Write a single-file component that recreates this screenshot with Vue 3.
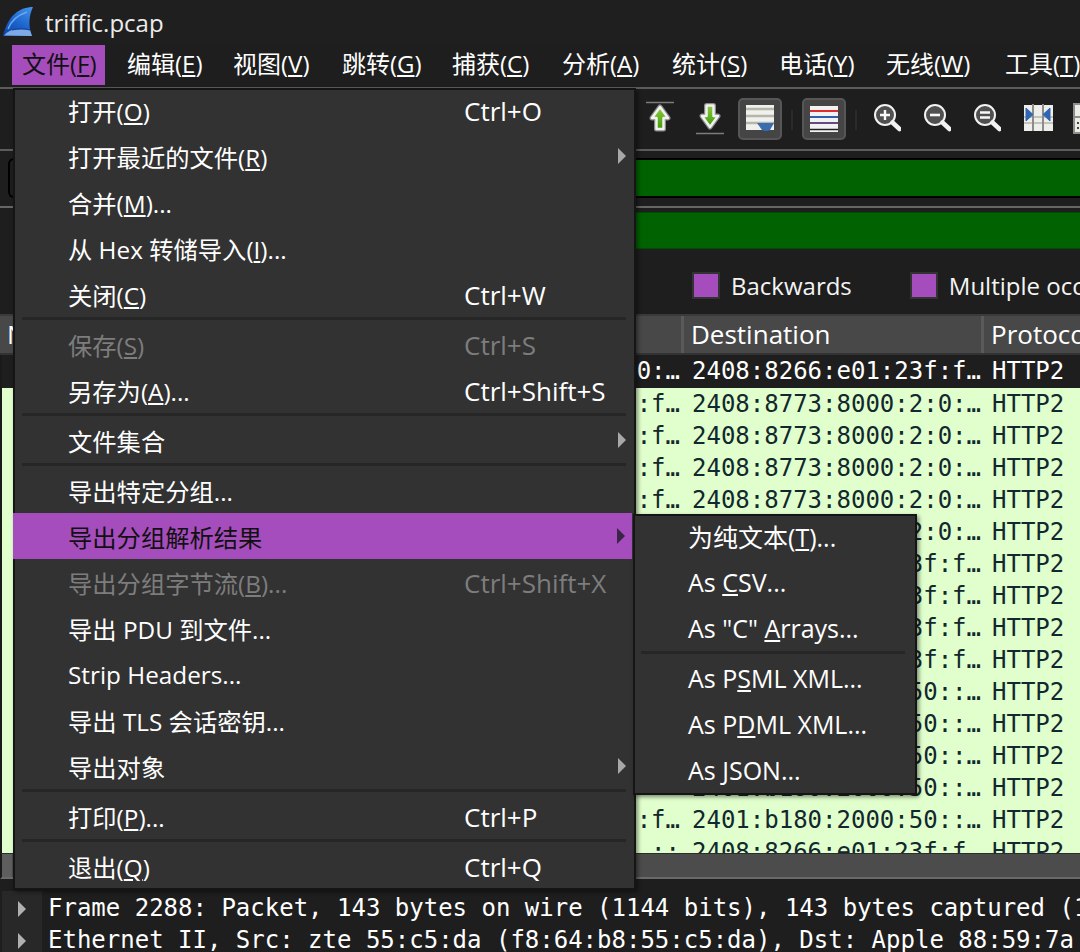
<template>
  <div class="app">
    <div class="titlebar">
      <svg class="logo" width="36" height="36" viewBox="0 4 36 36">
        <defs>
          <linearGradient id="fin" x1="0.8" y1="0" x2="0.2" y2="1">
            <stop offset="0" stop-color="#3f8fe8" />
            <stop offset="0.55" stop-color="#1c62cc" />
            <stop offset="1" stop-color="#0f46a4" />
          </linearGradient>
          <linearGradient id="arrowUp" x1="0" y1="0" x2="0" y2="1">
            <stop offset="0" stop-color="#8ccc40" />
            <stop offset="1" stop-color="#3f9a08" />
          </linearGradient>
        </defs>
        <path d="M33 7C20 7 8 15 3 36L32 36C28 26 29 15 33 7Z" fill="url(#fin)" />
        <path d="M4 35.500C6 33 9 31 12 30C18 29 25 29 30 30L32 36Z" fill="#7fa9e4" />
        <path d="M12 30C18 28.500 25 28.500 30 30" stroke="#0f3f94" stroke-width="1" fill="none" />
        <path d="M27 12C18 15 11 21 8 29" stroke="#6aa8f0" stroke-width="1.500" fill="none" />
      </svg>
      <span class="title">triffic.pcap</span>
    </div>

    <div class="menubar">
      <div
        v-for="(m, i) in menus"
        :key="m.name"
        class="menubar-item"
        :class="{ open: i === 0 }"
        :style="{ width: m.w + 'px' }"
      >{{ m.name }}(<u>{{ m.key }}</u>)</div>
    </div>

    <div class="toolbar">
      <svg class="tool" width="30" height="40" viewBox="0 0 30 40">
        <path d="M1 2.500H29" stroke="#7c7c7c" stroke-width="1.500" />
        <path d="M15 7L23 18H18.500V29H11.500V18H7Z" fill="none" stroke="#8a8a8a" stroke-width="5" stroke-linejoin="round" />
        <path d="M15 7L23 18H18.500V29H11.500V18H7Z" fill="url(#arrowUp)" stroke="#f2f2f2" stroke-width="2.500" stroke-linejoin="round" />
      </svg>
      <svg class="tool down" width="30" height="40" viewBox="0 0 30 40">
        <path d="M1 33.500H29" stroke="#7c7c7c" stroke-width="1.500" />
        <path d="M15 27L23 16H18.500V5.500H11.500V16H7Z" fill="none" stroke="#8a8a8a" stroke-width="5" stroke-linejoin="round" />
        <path d="M15 27L23 16H18.500V5.500H11.500V16H7Z" fill="url(#arrowUp)" stroke="#f2f2f2" stroke-width="2.500" stroke-linejoin="round" />
      </svg>
      <div class="tool-btn">
        <svg width="30" height="28" viewBox="0 0 30 28">
          <rect x="1" y="0" width="28" height="25" fill="#f0f0ec" />
          <path d="M1 4H29M1 11H29M1 18H29" stroke="#b6b6aa" stroke-width="2.500" />
          <path d="M12 18H29L25 25Q21 27 17 25Z" fill="#3a6cb0" />
        </svg>
      </div>
      <div class="tool-sep"></div>
      <div class="tool-btn">
        <svg width="30" height="28" viewBox="0 0 30 28">
          <rect x="1" y="1" width="28" height="26" fill="#f2f2f2" />
          <path d="M1 6H29" stroke="#e02c2c" stroke-width="2" />
          <path d="M1 12H29" stroke="#2f5fae" stroke-width="2" />
          <path d="M1 18H29" stroke="#654a80" stroke-width="2" />
          <path d="M1 24.500H29" stroke="#222" stroke-width="1.500" />
        </svg>
      </div>
      <div class="tool-sep last"></div>
      <svg v-for="z in zooms" :key="z" class="tool" width="30" height="40" viewBox="0 0 30 40">
        <circle cx="14" cy="15" r="10" fill="#505050" stroke="#f2f2f2" stroke-width="2" />
        <path d="M21.500 22.500L28.500 29" stroke="#f2f2f2" stroke-width="4.500" stroke-linecap="round" />
        <path v-if="z === 'in'" d="M9 15H19M14 10V20" stroke="#f8f8f8" stroke-width="2.400" />
        <path v-if="z === 'out'" d="M9 15H19" stroke="#f8f8f8" stroke-width="2.600" />
        <path v-if="z === 'fit'" d="M9 12.500H19M9 17.500H19" stroke="#f8f8f8" stroke-width="2.400" />
      </svg>
      <svg class="tool resize" width="34" height="40" viewBox="0 0 34 40">
        <rect x="3" y="5" width="29" height="26" fill="#eeeeea" />
        <path d="M3 17H32M3 23H32" stroke="#b6b6ac" stroke-width="1.500" />
        <path d="M12 4V31M22 4V31" stroke="#8c8c8c" stroke-width="2" />
        <path d="M5 8L12 14.500L5 21Z M29 8L22 14.500L29 21Z" fill="#2f66b4" stroke="#2f66b4" stroke-linejoin="round" />
      </svg>
      <svg class="tool" width="30" height="40" viewBox="0 0 30 40">
        <rect x="1" y="4" width="28" height="29" fill="#ecece6" stroke="#8e8e8e" stroke-width="2" />
        <path d="M1 17H29" stroke="#8e8e8e" stroke-width="2" />
        <path d="M5 22V24M5 27V29" stroke="#444" stroke-width="2" />
      </svg>
    </div>

    <div class="filter-box"><div class="filter-green"></div></div>
    <div class="divider"></div>
    <div class="filter-plain"></div>

    <div class="findbar">
      <label class="check"><span class="box"></span>Backwards</label>
      <label class="check"><span class="box"></span>Multiple occurrences</label>
    </div>

    <div class="table-head">
      <div class="head-src"><span class="no">No.</span></div>
      <div class="head-dst">Destination</div>
      <div class="head-proto">Protocol</div>
    </div>
    <div class="rows">
      <div v-for="(r, i) in rows" :key="i" class="row" :class="{ first: i === 0 }">
        <div class="col-src">{{ r.src }}</div>
        <div class="col-dst">{{ r.dst }}</div>
        <div class="col-proto">HTTP2</div>
      </div>
    </div>
    <div class="hscroll"><div class="hscroll-end"></div></div>

    <div class="details">
      <div class="gutter">
        <span v-for="d in details" :key="d" class="gutter-cell"><span class="tree-arrow"></span></span>
      </div>
      <div class="lines">
        <div v-for="d in details" :key="d" class="detail">{{ d }}</div>
      </div>
    </div>

    <!-- 文件 menu -->
    <div class="menu file-menu">
      <template v-for="(item, i) in fileMenu" :key="i">
        <div v-if="item.sep" class="sep"></div>
        <div v-else class="item" :class="{ disabled: item.disabled, active: item.active }">
          <span class="label">{{ item.a }}<u v-if="item.k">{{ item.k }}</u>{{ item.b }}</span>
          <span v-if="item.sc" class="shortcut">{{ item.sc }}</span>
          <span v-if="item.sub" class="arrow"></span>
        </div>
      </template>
    </div>

    <!-- 导出分组解析结果 submenu -->
    <div class="menu sub-menu">
      <template v-for="(item, i) in subMenu" :key="i">
        <div v-if="item.sep" class="sep"></div>
        <div v-else class="item">
          <span class="label">{{ item.a }}<u>{{ item.k }}</u>{{ item.b }}</span>
        </div>
      </template>
    </div>
  </div>
</template>

<script setup>
const menus = [
  { name: '文件', key: 'F', w: 93 },
  { name: '编辑', key: 'E', w: 94 },
  { name: '视图', key: 'V', w: 97 },
  { name: '跳转', key: 'G', w: 98 },
  { name: '捕获', key: 'C', w: 98 },
  { name: '分析', key: 'A', w: 98 },
  { name: '统计', key: 'S', w: 95 },
  { name: '电话', key: 'Y', w: 95 },
  { name: '无线', key: 'W', w: 107 },
  { name: '工具', key: 'T', w: 90 }
]

const zooms = ['in', 'out', 'fit']

const D8773 = '2408:8773:8000:2:0:…'
const D8266 = '2408:8266:e01:23f:f…'
const D2401 = '2401:b180:2000:50::…'

const rows = [
  { src: '0:…', dst: D8266 },
  { src: ':f…', dst: D8773 },
  { src: ':f…', dst: D8773 },
  { src: ':f…', dst: D8773 },
  { src: ':f…', dst: D8773 },
  { src: '', dst: D8773 },
  { src: '', dst: D8266 },
  { src: '', dst: D8266 },
  { src: '', dst: D8266 },
  { src: '', dst: D8266 },
  { src: '', dst: D2401 },
  { src: '', dst: D2401 },
  { src: '', dst: D2401 },
  { src: '', dst: D2401 },
  { src: ':f…', dst: D2401 },
  { src: '::', dst: D8266 }
]

const details = [
  'Frame 2288: Packet, 143 bytes on wire (1144 bits), 143 bytes captured (1144 bits)',
  'Ethernet II, Src: zte_55:c5:da (f8:64:b8:55:c5:da), Dst: Apple_88:59:7a'
]

const fileMenu = [
  { a: '打开(', k: 'O', b: ')', sc: 'Ctrl+O' },
  { a: '打开最近的文件(', k: 'R', b: ')', sub: true },
  { a: '合并(', k: 'M', b: ')...' },
  { a: '从 Hex 转储导入(', k: 'I', b: ')...' },
  { a: '关闭(', k: 'C', b: ')', sc: 'Ctrl+W' },
  { sep: true },
  { a: '保存(', k: 'S', b: ')', sc: 'Ctrl+S', disabled: true },
  { a: '另存为(', k: 'A', b: ')...', sc: 'Ctrl+Shift+S' },
  { sep: true },
  { a: '文件集合', sub: true },
  { sep: true },
  { a: '导出特定分组...' },
  { a: '导出分组解析结果', sub: true, active: true },
  { a: '导出分组字节流(', k: 'B', b: ')...', sc: 'Ctrl+Shift+X', disabled: true },
  { a: '导出 PDU 到文件...' },
  { a: 'Strip Headers...' },
  { a: '导出 TLS 会话密钥...' },
  { a: '导出对象', sub: true },
  { sep: true },
  { a: '打印(', k: 'P', b: ')...', sc: 'Ctrl+P' },
  { sep: true },
  { a: '退出(', k: 'Q', b: ')', sc: 'Ctrl+Q' }
]

const subMenu = [
  { a: '为纯文本(', k: 'T', b: ')...' },
  { a: 'As ', k: 'C', b: 'SV...' },
  { a: 'As "C" ', k: 'A', b: 'rrays...' },
  { sep: true },
  { a: 'As P', k: 'S', b: 'ML XML...' },
  { a: 'As P', k: 'D', b: 'ML XML...' },
  { a: 'As ', k: 'J', b: 'SON...' }
]
</script>

<style>
html, body {
  margin: 0;
  background: #1e1e1e;
}
</style>

<style scoped>
.app {
  position: relative;
  width: 1080px;
  height: 952px;
  overflow: hidden;
  background: #1e1e1e;
  color: #fff;
  font-family: "Open Sans", "Noto Sans CJK SC", sans-serif;
  font-size: 24px;
}

.titlebar {
  height: 44px;
  display: flex;
  align-items: center;
  background: #1f1f1f;
}
.logo {
  flex: none;
}
.title {
  margin-left: 9px;
  color: #ececec;
}

.menubar {
  height: 43px;
  display: flex;
  padding-left: 12px;
  border-bottom: 2px solid #5c5c5c;
}
.menubar-item {
  flex: none;
  box-sizing: border-box;
  height: 40px;
  margin-top: 1px;
  padding-left: 10px;
  margin-right: 12px;
  line-height: 38px;
  white-space: nowrap;
}
.menubar-item.open {
  background: #a64dbd;
  color: #111;
}

.toolbar {
  height: 59px;
  display: flex;
  align-items: center;
  padding-left: 645px;
  padding-top: 1px;
  border-bottom: 2px solid #5c5c5c;
}
.tool {
  flex: none;
  margin-right: 20px;
}
.tool.down {
  margin-right: 13px;
}
.tool.resize {
  margin-right: 18px;
}
.tool-btn {
  flex: none;
  width: 44px;
  height: 42px;
  margin-top: -2px;
  box-sizing: border-box;
  display: flex;
  align-items: center;
  justify-content: center;
  background: #454545;
  border: 2px solid #565656;
  border-radius: 5px;
}
.tool-sep {
  flex: none;
  width: 2px;
  height: 20px;
  margin: 0 9px;
  background: #2a2a2a;
}
.tool-sep.last {
  margin-right: 14px;
}

.filter-box {
  box-sizing: border-box;
  height: 40px;
  margin-top: 7px;
  margin-left: 8px;
  padding-left: 90px;
  border: 2px solid #000;
  border-right: 0;
  border-radius: 6px 0 0 6px;
}
.filter-green {
  height: 100%;
  background: #006200;
}
.divider {
  height: 2px;
  margin-top: 8px;
  background: #666;
}
.filter-plain {
  box-sizing: border-box;
  height: 37px;
  margin-top: 4px;
  margin-left: 100px;
  background: #006200;
  border-top: 1px solid #004c00;
  border-bottom: 1px solid #004c00;
}

.findbar {
  box-sizing: border-box;
  height: 65px;
  padding-top: 8px;
  padding-left: 692px;
  display: flex;
  align-items: center;
  white-space: nowrap;
}
.check {
  display: flex;
  align-items: center;
  margin-right: 58px;
  color: #f4f4f4;
}
.box {
  width: 24px;
  height: 23px;
  margin-right: 11px;
  background: #a64dbd;
  border: 2px solid #333;
}

.table-head {
  box-sizing: border-box;
  height: 41px;
  display: flex;
  background: #484848;
  border-top: 2px solid #3a3a3a;
  border-bottom: 2px solid #333;
  font-size: 26px;
  line-height: 36px;
  white-space: nowrap;
}
.head-src {
  flex: none;
  box-sizing: border-box;
  width: 684px;
  border-right: 3px solid #5a5a5a;
}
.head-dst {
  flex: none;
  box-sizing: border-box;
  width: 300px;
  padding-left: 7px;
  border-right: 3px solid #5a5a5a;
}
.head-proto {
  flex: none;
  padding-left: 7px;
}
.no {
  margin-left: 7px;
}

.rows {
  height: 498px;
  overflow: hidden;
  font-family: "DejaVu Sans Mono", monospace;
}
.row {
  height: 32px;
  display: flex;
  line-height: 32px;
  background: #e0ffcc;
  color: #12272e;
  border-left: 2px solid #1a1a1a;
}
.row.first {
  height: 33px;
  line-height: 33px;
  background: #1e1e1e;
  color: #fff;
}
.col-src {
  flex: none;
  box-sizing: border-box;
  width: 680px;
  padding-right: 2px;
  text-align: right;
}
.col-dst {
  flex: none;
  box-sizing: border-box;
  width: 301px;
  padding-left: 10px;
  white-space: nowrap;
  overflow: hidden;
}
.col-proto {
  flex: none;
  padding-left: 9px;
  white-space: nowrap;
}

.hscroll {
  box-sizing: border-box;
  height: 26px;
  background: #4c4c4c;
  border-top: 1px solid #2c2c2c;
  border-bottom: 2px solid #6a6a6a;
  border-left: 2px solid #1a1a1a;
}
.hscroll-end {
  width: 10px;
  height: 100%;
  background: #5e5e5e;
}

.details {
  display: flex;
  margin-top: 12px;
  font-family: "DejaVu Sans Mono", monospace;
  white-space: nowrap;
}
.gutter {
  flex: none;
  width: 40px;
  margin-left: 2px;
  padding-top: 2px;
  background: #282828;
}
.gutter-cell {
  height: 32px;
  display: flex;
  align-items: center;
  padding-left: 16px;
}
.lines {
  margin-left: 6px;
  padding-top: 1px;
}
.detail {
  height: 32px;
  line-height: 32px;
}
.tree-arrow {
  width: 0;
  height: 0;
  border-left: 8px solid #b0b0b0;
  border-top: 8px solid transparent;
  border-bottom: 8px solid transparent;
}

.menu {
  position: absolute;
  box-sizing: border-box;
  background: #323232;
  border: 2px solid #151515;
  box-shadow: 2px 2px 4px rgba(0, 0, 0, 0.45);
}
.file-menu {
  left: 13px;
  top: 88px;
  width: 623px;
  height: 802px;
}
.sub-menu {
  left: 633px;
  top: 514px;
  width: 284px;
  height: 281px;
}
.item {
  position: relative;
  height: 46px;
  display: flex;
  align-items: center;
  padding-left: 53px;
  white-space: nowrap;
  font-size: 24.3px;
}
.sub-menu .item {
  font-size: 25px;
}
.item:first-child {
  margin-top: -3px;
}
.item.disabled {
  color: #7d7d7d;
}
.item.active {
  background: #a64dbd;
  margin-left: -2px;
  padding-left: 55px;
  margin-right: 2px;
  color: #111;
}
.label {
  width: 396px;
  flex: none;
}
.shortcut {
  margin-top: 1px;
  font-size: 26px;
}
.sep {
  height: 3px;
  margin: 0 8px 1px 7px;
  background: #262626;
}
.sub-menu .sep {
  margin: 0 10px 1px 6px;
}
.arrow {
  position: absolute;
  right: 8px;
  top: 15px;
  border-left: 8px solid #a8a8a8;
  border-top: 8px solid transparent;
  border-bottom: 8px solid transparent;
}
.item.active .arrow {
  right: 7px;
  border-left-color: #3a2448;
}
</style>
